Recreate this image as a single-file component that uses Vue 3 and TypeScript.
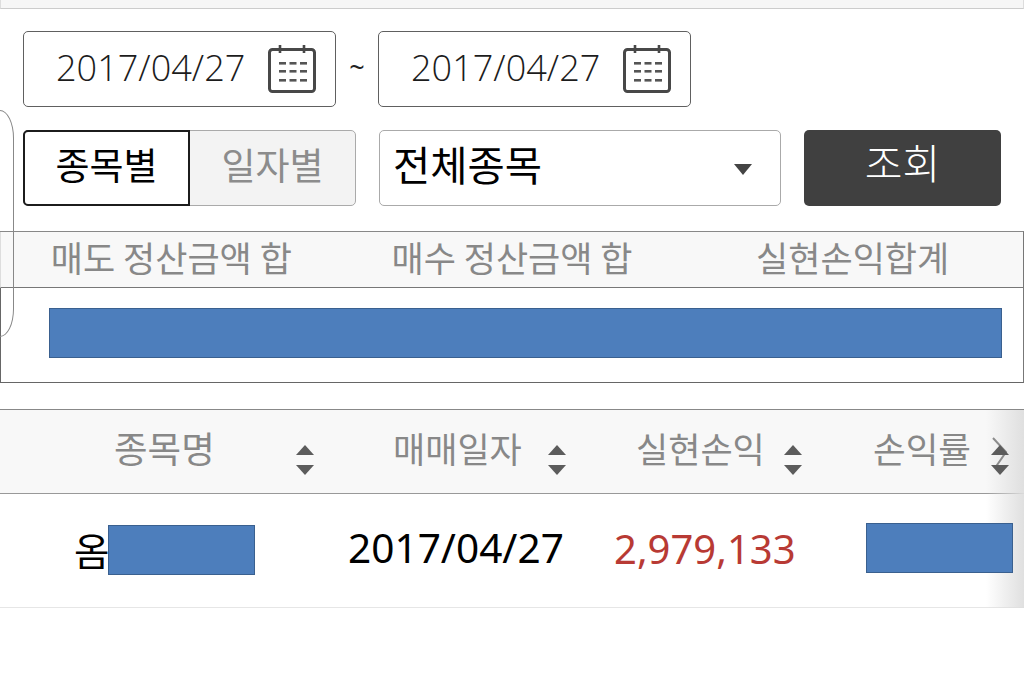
<script setup lang="ts">
const columns = [
  { label: '종목명', cls: 'c1' },
  { label: '매매일자', cls: 'c2' },
  { label: '실현손익', cls: 'c3' },
  { label: '손익률', cls: 'c4' },
]
const summary = ['매도 정산금액 합', '매수 정산금액 합', '실현손익합계']
const dates = ['2017/04/27', '2017/04/27']
const dots = [56, 66.5, 77]
const dotRows = [63, 71, 80]
</script>

<template>
  <div class="page">
    <div class="topstrip"></div>

    <div class="daterow">
      <template v-for="(d, i) in dates" :key="i">
        <span v-if="i === 1" class="tilde">~</span>
        <div class="dateinput">
          <span class="datetext">{{ d }}</span>
          <svg class="cal" viewBox="45 45 48 50" width="48" height="50" aria-hidden="true">
            <rect x="46.5" y="50.5" width="45" height="42" rx="3" fill="none" stroke="#484848" stroke-width="3" />
            <path d="M57 46v8M81 46v8" stroke="#484848" stroke-width="2.6" fill="none" />
            <g v-for="y in dotRows" :key="y">
              <rect v-for="x in dots" :key="x" :x="x" :y="y" width="7" height="2.6" fill="#555" />
            </g>
          </svg>
        </div>
      </template>
    </div>

    <div class="filterrow">
      <div class="toggle">
        <div class="tog on">종목별</div>
        <div class="tog off">일자별</div>
      </div>
      <div class="select">
        <span>전체종목</span>
        <i class="caret"></i>
      </div>
      <button class="search" type="button">조회</button>
    </div>

    <section class="summary">
      <div class="sumhead">
        <div v-for="s in summary" :key="s" class="sumcell">{{ s }}</div>
      </div>
      <div class="sumbody">
        <div class="mask wide"></div>
      </div>
    </section>

    <section class="list">
      <div class="listhead">
        <div v-for="c in columns" :key="c.label" class="hcell" :class="c.cls">
          <span class="hlabel">{{ c.label }}</span>
          <span class="sort"><i class="up"></i><i class="down"></i></span>
        </div>
      </div>
      <div class="listrow">
        <div class="rcell c1"><span class="name">옴</span><div class="mask"></div></div>
        <div class="rcell c2"><span class="date">2017/04/27</span></div>
        <div class="rcell c3"><span class="profit">2,979,133</span></div>
        <div class="rcell c4"><div class="mask up2"></div></div>
      </div>
      <div class="fade"></div>
      <svg class="chev" viewBox="0 0 20 34" width="20" height="34" aria-hidden="true">
        <path d="M2 1l13 14L4 31" fill="none" stroke="#8c8c8c" stroke-width="2" />
      </svg>
    </section>

    <div class="bracket"></div>
  </div>
</template>

<style>
html, body { margin: 0; background: #fff; }
</style>

<style scoped>
.page {
  position: relative;
  width: 1024px;
  height: 676px;
  overflow: hidden;
  background: #fff;
  font-family: "Noto Sans CJK KR", "Noto Sans", sans-serif;
}
.topstrip {
  height: 8px;
  background: #f6f6f6;
  border-bottom: 1px solid #ccc;
  border-left: 1px solid #ddd;
  border-right: 1px solid #ddd;
}
.daterow {
  display: flex;
  align-items: center;
  padding: 22px 0 0 23px;
}
.dateinput {
  box-sizing: border-box;
  width: 313px;
  height: 76px;
  border: 1px solid #606060;
  border-radius: 5px;
  display: flex;
  align-items: center;
  padding-left: 32px;
}
.datetext {
  font-family: "Open Sans", "Noto Sans", sans-serif;
  font-weight: 300;
  font-size: 36.1px;
  color: #1c1c1c;
  width: 212px;
  line-height: 1;
  position: relative;
  top: -2px;
}
.tilde {
  width: 42px;
  text-align: center;
  font-family: "Noto Sans", sans-serif;
  font-size: 27px;
  color: #222;
  line-height: 1;
  position: relative;
  top: -3px;
}
.cal { flex: none; }
.filterrow {
  display: flex;
  padding: 23px 0 0 23px;
  height: 76px;
}
.toggle {
  box-sizing: border-box;
  width: 333px;
  height: 76px;
  display: flex;
  border: 1px solid #aaa;
  border-radius: 5px;
  background: #f3f3f3;
}
.tog {
  font-size: 37px;
  display: flex;
  align-items: center;
  justify-content: center;
  line-height: 1;
  padding-bottom: 8px;
  box-sizing: border-box;
}
.tog.on {
  width: 167px;
  margin: -1px 0 -1px -1px;
  background: #fff;
  color: #000;
  border: 2px solid #1c1c1c;
  border-radius: 5px 0 0 5px;
}
.tog.off {
  flex: 1;
  color: #8c8c8c;
}
.select {
  box-sizing: border-box;
  margin-left: 23px;
  width: 402px;
  height: 76px;
  border: 1px solid #aaa;
  border-radius: 5px;
  display: flex;
  align-items: center;
  padding: 0 28px 0 13px;
  justify-content: space-between;
  font-size: 40.5px;
  color: #000;
}
.select span { position: relative; top: -5px; }
.caret {
  width: 0;
  height: 0;
  border-left: 9px solid transparent;
  border-right: 9px solid transparent;
  border-top: 11px solid #444;
  margin-top: 3px;
}
.search {
  margin-left: 23px;
  width: 197px;
  height: 76px;
  border: 0;
  border-radius: 5px;
  background: #404040;
  color: #fff;
  font-family: inherit;
  font-size: 41px;
  font-weight: 300;
  padding: 0 0 15px;
}
.summary {
  margin-top: 25px;
  box-sizing: border-box;
  width: 1024px;
  height: 152px;
  border-top: 1px solid #888;
  border-bottom: 1px solid #666;
  border-right: 1px solid #777;
}
.sumhead {
  display: grid;
  grid-template-columns: repeat(3, 1fr);
  height: 55px;
  background: #f8f8f8;
  border-bottom: 1px solid #777;
  border-left: 1px solid #ddd;
}
.sumcell {
  font-size: 35px;
  color: #888;
  text-align: center;
  line-height: 49px;
  white-space: nowrap;
}
.sumbody {
  box-sizing: border-box;
  height: 95px;
  border-left: 1px solid #666;
  padding: 20px 0 0 48px;
}
.mask {
  box-sizing: border-box;
  width: 147px;
  height: 50px;
  background: #4d7ebc;
  border: 1px solid #3a608f;
  position: relative;
  z-index: 1;
}
.mask.wide { width: 953px; }
.list {
  position: relative;
  margin-top: 26px;
}
.listhead {
  display: grid;
  grid-template-columns: 330px 270px 250px 174px;
  height: 85px;
  box-sizing: border-box;
  border-top: 1px solid #888;
  border-bottom: 1px solid #999;
  background: #f8f8f8;
  white-space: nowrap;
}
.hcell {
  display: flex;
  align-items: flex-start;
}
.hlabel {
  font-size: 35px;
  color: #888;
  line-height: 76px;
}
.hcell.c1 { padding-left: 114px; }
.hcell.c2 { padding-left: 63px; }
.hcell.c3 { padding-left: 36px; }
.hcell.c4 { padding-left: 23px; }
.hcell.c1 .hlabel { font-size: 36.5px; width: 100px; }
.hcell.c2 .hlabel { width: 127px; }
.hcell.c3 .hlabel { width: 126px; }
.hcell.c4 .hlabel { font-size: 35.5px; width: 96px; }
.sort {
  display: flex;
  flex-direction: column;
  gap: 10px;
  padding-top: 35px;
  position: relative;
  z-index: 1;
}
.hcell.c1 .sort { margin-left: 82px; }
.hcell.c2 .sort { margin-left: 28px; }
.hcell.c3 .sort { margin-left: 22px; }
.hcell.c4 .sort { margin-left: 22px; }
.up, .down {
  display: block;
  width: 0;
  height: 0;
  border-left: 9px solid transparent;
  border-right: 9px solid transparent;
}
.up { border-bottom: 10px solid #5c5c5c; }
.down { border-top: 10px solid #5c5c5c; }
.listrow {
  display: grid;
  grid-template-columns: 330px 270px 250px 174px;
  height: 114px;
  box-sizing: border-box;
  border-bottom: 1px solid #e6e6e6;
}
.rcell {
  display: flex;
  align-items: center;
  white-space: nowrap;
}
.rcell.c1 { padding-left: 75px; }
.rcell.c2 { padding-left: 18px; }
.rcell.c3 { padding-left: 14px; }
.rcell.c4 { padding-left: 16px; }
.rcell.c1 .mask { top: -1px; }
.name {
  font-size: 38.5px;
  color: #000;
  line-height: 1;
  width: 33px;
  position: relative;
  top: -1px;
  left: -1px;
  flex: none;
}
.date, .profit {
  font-family: "Noto Sans", sans-serif;
  font-size: 40.6px;
  line-height: 1;
  position: relative;
  top: -2px;
}
.date { color: #000; }
.profit { color: #b83a34; font-size: 40px; }
.mask.up2 { top: -3px; }
.fade {
  position: absolute;
  top: 1px;
  right: 0;
  bottom: 0;
  width: 38px;
  background: linear-gradient(to right, rgba(225, 225, 225, 0), rgba(222, 222, 222, 0.95));
}
.chev {
  position: absolute;
  left: 991px;
  top: 28px;
}
.bracket {
  position: absolute;
  left: -30px;
  top: 110px;
  width: 44px;
  height: 227px;
  box-sizing: border-box;
  border: 1px solid #888;
  border-radius: 0 14px 14px 0 / 0 28px 28px 0;
}
</style>
